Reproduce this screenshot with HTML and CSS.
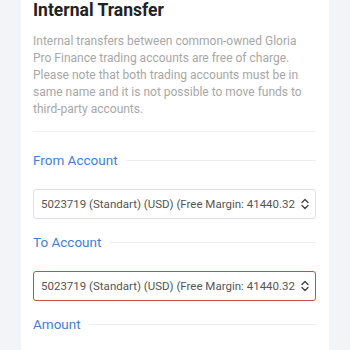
FILE: index.html
```html
<!DOCTYPE html>
<html>
<head>
<meta charset="utf-8">
<link rel="stylesheet" href="styles.css">
</head>
<body>
<div class="page">
  <div class="card">
    <h2 class="title">Internal Transfer</h2>
    <p class="desc">Internal transfers between common-owned Gloria Pro Finance trading accounts are free of charge. Please note that both trading accounts must be in same name and it is not possible to move funds to third-party accounts.</p>
    <hr class="sep">
    <div class="section first">
      <div class="legend"><span>From Account</span><i class="line"></i></div>
      <div class="select">
        <span class="val">5023719 (Standart) (USD) (Free Margin: 41440.32</span>
        <svg class="arrows" width="8" height="12" viewBox="0 0 8 12"><path d="M1 4.5 L4 1.5 L7 4.5 M1 7.5 L4 10.5 L7 7.5" fill="none" stroke="#444" stroke-width="1.4" stroke-linecap="round" stroke-linejoin="round"/></svg>
      </div>
    </div>
    <div class="section">
      <div class="legend"><span>To Account</span><i class="line"></i></div>
      <div class="select invalid">
        <span class="val">5023719 (Standart) (USD) (Free Margin: 41440.32</span>
        <svg class="arrows" width="8" height="12" viewBox="0 0 8 12"><path d="M1 4.5 L4 1.5 L7 4.5 M1 7.5 L4 10.5 L7 7.5" fill="none" stroke="#444" stroke-width="1.4" stroke-linecap="round" stroke-linejoin="round"/></svg>
      </div>
    </div>
    <div class="section">
      <div class="legend"><span>Amount</span><i class="line"></i></div>
    </div>
  </div>
</div>
</body>
</html>
```
FILE: styles.css
```css
html, body {
  margin: 0;
  padding: 0;
  background: #f3f4f8;
  font-family: Roboto, "Noto Sans", sans-serif;
}
.page {
  padding: 0 21px;
}
.card {
  background: #fff;
  padding: 0 13px 0 12px;
  height: 350px;
  overflow: hidden;
}
.title {
  margin: 0;
  font-size: 17.5px;
  line-height: 21px;
  font-weight: 700;
  color: #222;
}
.desc {
  margin: 12px 0 0 0;
  font-size: 12px;
  line-height: 17px;
  color: #a7a7a7;
}
.sep {
  margin: 13px 0 0 0;
  border: 0;
  border-top: 1px solid #eef0f2;
}
.section {
  margin-top: 13px;
}
.section.first {
  margin-top: 18px;
}
.legend {
  display: flex;
  align-items: center;
  gap: 8px;
  color: #3f7fd9;
  font-size: 13.5px;
  line-height: 20px;
}
.legend .line {
  flex: 1;
  height: 1px;
  background: #eceef1;
}
.select {
  margin-top: 19px;
  height: 28px;
  border: 1px solid #dcdfe3;
  border-radius: 3px;
  display: flex;
  align-items: center;
  padding: 0 6px 0 7px;
  gap: 4px;
  font-size: 11.5px;
  color: #555;
}
.select.invalid {
  border-color: #cf4a4a;
}
.val {
  flex: 1;
  white-space: nowrap;
  overflow: hidden;
}
.arrows {
  flex: none;
}
```
